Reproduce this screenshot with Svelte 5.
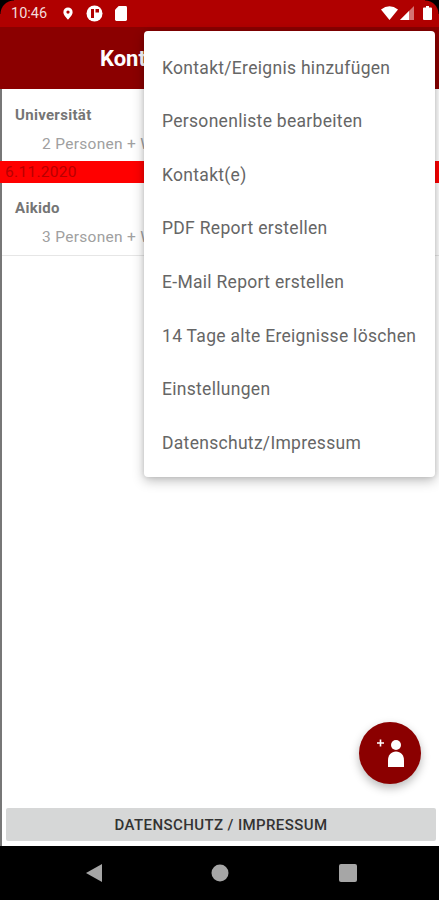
<script>
  const menuItems = [
    'Kontakt/Ereignis hinzufügen',
    'Personenliste bearbeiten',
    'Kontakt(e)',
    'PDF Report erstellen',
    'E-Mail Report erstellen',
    '14 Tage alte Ereignisse löschen',
    'Einstellungen',
    'Datenschutz/Impressum'
  ];

  const groups = [
    { date: null, name: 'Universität', detail: '2 Personen + Weitere' },
    { date: '6.11.2020', name: 'Aikido', detail: '3 Personen + Weitere' }
  ];
</script>

<div class="screen">
  <div class="status">
    <span class="time">10:46</span>
    <svg class="ic" width="12" height="15" viewBox="0 0 14 16"><path d="M7 1a5.400 5.400 0 0 0-5.400 5.400C1.600 10 7 15 7 15s5.400-5 5.400-8.600A5.400 5.400 0 0 0 7 1zm0 7.200a1.900 1.900 0 1 1 0-3.800 1.900 1.900 0 0 1 0 3.800z" fill="#fff"/></svg>
    <svg class="ic" width="17" height="17" viewBox="0 0 17 17"><circle cx="8.500" cy="8.500" r="8" fill="#fff"/><path d="M5 4h3v9H5zM9.500 4H13v3.500H9.500z" fill="#b00000"/></svg>
    <svg class="ic" width="12" height="15" viewBox="0 0 13 16"><path d="M4 0h7.500A1.500 1.500 0 0 1 13 1.500v13a1.500 1.500 0 0 1-1.500 1.500h-10A1.500 1.500 0 0 1 0 14.500V4z" fill="#fff"/></svg>
    <span class="spacer"></span>
    <svg width="17" height="14" viewBox="0 0 17 14"><path d="M0 3.500Q8.500-3 17 3.500L8.500 14z" fill="#fff"/></svg>
    <svg class="signal" width="14" height="14" viewBox="0 0 14 14"><path d="M14 0v14H0z" fill="#fff" opacity=".45"/><path d="M9 5v9H0z" fill="#fff"/></svg>
    <svg class="battery" width="9" height="14" viewBox="0 0 9 14"><path d="M3 0h3v1.500h2a1 1 0 0 1 1 1V13a1 1 0 0 1-1 1H1a1 1 0 0 1-1-1V2.500a1 1 0 0 1 1-1h2z" fill="#fff"/></svg>
  </div>

  <header class="appbar">Kontakte</header>

  <main class="content">
    {#each groups as g}
      {#if g.date}
        <div class="date">{g.date}</div>
      {/if}
      <div class="group">
        <div class="name">{g.name}</div>
        <div class="detail">{g.detail}</div>
      </div>
    {/each}

    <div class="bottom">
      <button class="imprint">DATENSCHUTZ / IMPRESSUM</button>
    </div>
  </main>

  <nav class="navbar">
    <svg width="16" height="18" viewBox="0 0 16 18"><path d="M16 0v18L0 9z" fill="#a6a6a6"/></svg>
    <svg width="18" height="18" viewBox="0 0 18 18"><circle cx="9" cy="9" r="8.500" fill="#a6a6a6"/></svg>
    <svg width="18" height="18" viewBox="0 0 18 18"><rect width="18" height="18" rx="2" fill="#a6a6a6"/></svg>
  </nav>

  <span class="corner left"></span>
  <span class="corner right"></span>

  <button class="fab" aria-label="Kontakt hinzufügen">
    <svg width="40" height="36" viewBox="0 0 40 36">
      <path d="M7 8h7M10.500 4.500v7" stroke="#fff" stroke-width="1.600" fill="none"/>
      <circle cx="26" cy="10" r="5" fill="#fff"/>
      <path d="M18 32v-6.500c0-5.500 3.200-9 8-9s8 3.500 8 9V32z" fill="#fff"/>
    </svg>
  </button>

  <div class="menu">
    {#each menuItems as item}
      <div class="item">{item}</div>
    {/each}
  </div>
</div>

<style>
  :global(body) {
    margin: 0;
    background: #fff;
  }

  .screen {
    position: relative;
    width: 439px;
    height: 900px;
    overflow: hidden;
    display: flex;
    flex-direction: column;
    font-family: Roboto, "Liberation Sans", sans-serif;
    background: #fff;
  }

  .status {
    height: 27px;
    background: #b00000;
    color: #f3dcdc;
    display: flex;
    align-items: center;
    gap: 12px;
    padding: 0 7px 1px 11px;
    box-sizing: border-box;
    font-size: 14.500px;
    flex: none;
  }

  .time {
    margin-right: 3px;
  }

  .spacer {
    flex: 1;
  }

  .signal {
    margin-left: -10px;
  }

  .battery {
    margin-left: -3px;
  }

  .appbar {
    height: 62px;
    flex: none;
    background: #8b0000;
    color: #fff;
    font-size: 22px;
    font-weight: 700;
    display: flex;
    align-items: center;
    padding-left: 100px;
    box-sizing: border-box;
  }

  .content {
    flex: 1;
    display: flex;
    flex-direction: column;
    border-left: 2px solid #777;
    min-height: 0;
  }

  .group {
    height: 72px;
    box-sizing: border-box;
    padding: 17px 0 0 13px;
    border-bottom: 1px solid #e6e6e6;
    color: #757575;
  }

  .group:first-child {
    border-bottom: none;
  }

  .name {
    font-size: 15px;
    font-weight: 700;
    letter-spacing: 0.3px;
    line-height: 18px;
  }

  .detail {
    font-size: 15.500px;
    letter-spacing: 0.3px;
    line-height: 18px;
    margin: 11px 0 0 27px;
    color: #a0a0a0;
    white-space: nowrap;
  }

  .date {
    height: 22px;
    background: #ff0000;
    color: #b80000;
    font-size: 15.500px;
    letter-spacing: 0.3px;
    line-height: 22px;
    padding-left: 5px;
    margin-left: -2px;
    flex: none;
  }

  .date + .group {
    height: 73px;
    padding-top: 16px;
  }

  .bottom {
    margin-top: auto;
    padding: 0 3px 5px 4px;
  }

  .imprint {
    display: block;
    width: 100%;
    height: 33px;
    border: none;
    border-radius: 2px;
    background: #d6d7d7;
    color: #333;
    font: 500 15px Roboto, "Liberation Sans", sans-serif;
    letter-spacing: 0.4px;
  }

  .navbar {
    height: 54px;
    flex: none;
    background: #000;
    display: flex;
    align-items: center;
    justify-content: center;
    gap: 109.500px;
    padding-left: 3px;
  }

  .corner {
    position: absolute;
    top: 0;
    width: 14px;
    height: 14px;
    background: #b00000;
  }

  .corner.left {
    left: 0;
    background: radial-gradient(circle at 100% 100%, transparent 13px, #000 14px);
  }

  .corner.right {
    right: 0;
    background: radial-gradient(circle at 0 100%, transparent 13px, #000 14px);
  }

  .fab {
    position: absolute;
    left: 359px;
    top: 722px;
    width: 62px;
    height: 62px;
    padding: 0;
    border: none;
    border-radius: 50%;
    background: #8b0000;
    box-shadow: 0 4px 10px rgba(0, 0, 0, 0.28);
    display: flex;
    align-items: center;
    justify-content: center;
  }

  .menu {
    position: absolute;
    left: 144px;
    top: 31px;
    width: 291px;
    height: 446px;
    box-sizing: border-box;
    padding: 10px 0 7.500px;
    background: #fff;
    border-radius: 4px;
    box-shadow: 0 4px 12px rgba(0, 0, 0, 0.25), 0 0 5px rgba(0, 0, 0, 0.12);
    display: flex;
    flex-direction: column;
  }

  .item {
    flex: 1;
    display: flex;
    align-items: center;
    padding-left: 18px;
    font-size: 17.500px;
    letter-spacing: 0.3px;
    color: #666;
    white-space: nowrap;
  }
</style>
